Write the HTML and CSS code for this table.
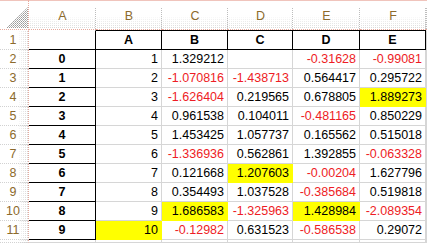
FILE: index.html
```html
<!DOCTYPE html>
<html>
<head>
<meta charset="utf-8">
<link rel="stylesheet" href="styles.css">
</head>
<body>
<div class="sheet">
  <div class="corner"><div class="tri"></div></div>
  <div class="hd">A</div><div class="hd">B</div><div class="hd">C</div><div class="hd">D</div><div class="hd">E</div><div class="hd">F</div><div class="hd"></div>

  <div class="rh r1">1</div>
  <div class="c r1 a1"></div>
  <div class="c r1 hdr">A</div><div class="c r1 hdr">B</div><div class="c r1 hdr">C</div><div class="c r1 hdr">D</div><div class="c r1 hdr">E</div>
  <div class="c r1"></div>

  <div class="rh">2</div><div class="c idx">0</div><div class="c num">1</div><div class="c num">1.329212</div><div class="c num"></div><div class="c num neg">-0.31628</div><div class="c num neg">-0.99081</div><div class="c"></div>
  <div class="rh">3</div><div class="c idx">1</div><div class="c num">2</div><div class="c num neg">-1.070816</div><div class="c num neg">-1.438713</div><div class="c num">0.564417</div><div class="c num">0.295722</div><div class="c"></div>
  <div class="rh">4</div><div class="c idx">2</div><div class="c num">3</div><div class="c num neg">-1.626404</div><div class="c num">0.219565</div><div class="c num">0.678805</div><div class="c num hl">1.889273</div><div class="c"></div>
  <div class="rh">5</div><div class="c idx">3</div><div class="c num">4</div><div class="c num">0.961538</div><div class="c num">0.104011</div><div class="c num neg">-0.481165</div><div class="c num">0.850229</div><div class="c"></div>
  <div class="rh">6</div><div class="c idx">4</div><div class="c num">5</div><div class="c num">1.453425</div><div class="c num">1.057737</div><div class="c num">0.165562</div><div class="c num">0.515018</div><div class="c"></div>
  <div class="rh">7</div><div class="c idx">5</div><div class="c num">6</div><div class="c num neg">-1.336936</div><div class="c num">0.562861</div><div class="c num">1.392855</div><div class="c num neg">-0.063328</div><div class="c"></div>
  <div class="rh">8</div><div class="c idx">6</div><div class="c num">7</div><div class="c num">0.121668</div><div class="c num hl">1.207603</div><div class="c num neg">-0.00204</div><div class="c num">1.627796</div><div class="c"></div>
  <div class="rh">9</div><div class="c idx">7</div><div class="c num">8</div><div class="c num">0.354493</div><div class="c num">1.037528</div><div class="c num neg">-0.385684</div><div class="c num">0.519818</div><div class="c"></div>
  <div class="rh">10</div><div class="c idx">8</div><div class="c num">9</div><div class="c num hl">1.686583</div><div class="c num neg">-1.325963</div><div class="c num hl">1.428984</div><div class="c num neg">-2.089354</div><div class="c"></div>
  <div class="rh">11</div><div class="c idx">9</div><div class="c num hl">10</div><div class="c num neg">-0.12982</div><div class="c num">0.631523</div><div class="c num neg">-0.586538</div><div class="c num">0.29072</div><div class="c"></div>
  <div class="rh"></div><div class="c"></div><div class="c"></div><div class="c"></div><div class="c"></div><div class="c"></div><div class="c"></div><div class="c"></div>
</div>
</body>
</html>
```

FILE: styles.css
```css
html, body {
  margin: 0;
  padding: 0;
  background: #fff;
  overflow: hidden;
}

.sheet {
  display: grid;
  grid-template-columns: 29px 67px 66px 66px 65px 67px 66px 1px;
  grid-template-rows: 30px 20px repeat(10, 19px) 3px;
  width: 427px;
  height: 243px;
  overflow: hidden;
  font-family: "Liberation Sans", Arial, sans-serif;
  font-size: 12.5px;
  line-height: 18px;
  color: #000;
}

.sheet > div {
  box-sizing: border-box;
  white-space: nowrap;
  overflow: hidden;
}

.corner {
  display: flex;
  border-top: 1px solid #f0c4bc;
  border-bottom: 1px dotted #e7a99d;
  border-right: 1px dotted #e7a99d;
}

.tri {
  width: 22px;
  height: 21px;
  margin: auto 0 1px auto;
  clip-path: polygon(100% 0, 100% 100%, 0 100%);
  background: conic-gradient(#9a9a9a 0 25%, #fff 0 50%, #b4b4b4 0 75%, #fff 0) 0 0 / 2px 2px;
}

.hd {
  border-top: 1px solid #f0c4bc;
  border-bottom: 1px dotted #e7a99d;
  text-align: center;
  padding-top: 6px;
  color: #8c6a2c;
  background:
    repeating-linear-gradient(to bottom, #bdbdbd 0 1px, transparent 1px 2px) right bottom / 1px 21px no-repeat,
    linear-gradient(#fff 50%, rgba(255,255,255,0.35) 100%),
    conic-gradient(#c2c2c2 0 25%, transparent 0) 0 0 / 2px 2px;
}

.rh {
  border-right: 1px dotted #e7a99d;
  border-bottom: 1px dotted #d2d2d2;
  text-align: center;
  padding-right: 2px;
  color: #8c6a2c;
  background:
    linear-gradient(90deg, #fff 62%, rgba(255,255,255,0.3) 100%),
    conic-gradient(#c2c2c2 0 25%, transparent 0) 0 0 / 2px 2px;
}

.rh.r1 {
  border-top: 1px solid #fff;
}

.c {
  border-right: 1px solid #d6d6d6;
  border-bottom: 1px solid #d6d6d6;
}

.c.r1 {
  border-top: 1px solid #fff;
}

.a1 {
  border-right-color: #000;
  border-bottom-color: #000;
}

.hdr {
  border-top-color: #000 !important;
  border-right-color: #000;
  border-bottom-color: #000;
  font-weight: bold;
  text-align: center;
}

.idx {
  border-right-color: #000;
  border-bottom-color: #000;
  font-weight: bold;
  text-align: center;
}

.num {
  text-align: right;
  padding-right: 3px;
}

.neg {
  color: #ee1c25;
}

.hl {
  background: #ffff00;
  border-right-color: #ffff00;
  border-bottom-color: #ffff00;
}
```
